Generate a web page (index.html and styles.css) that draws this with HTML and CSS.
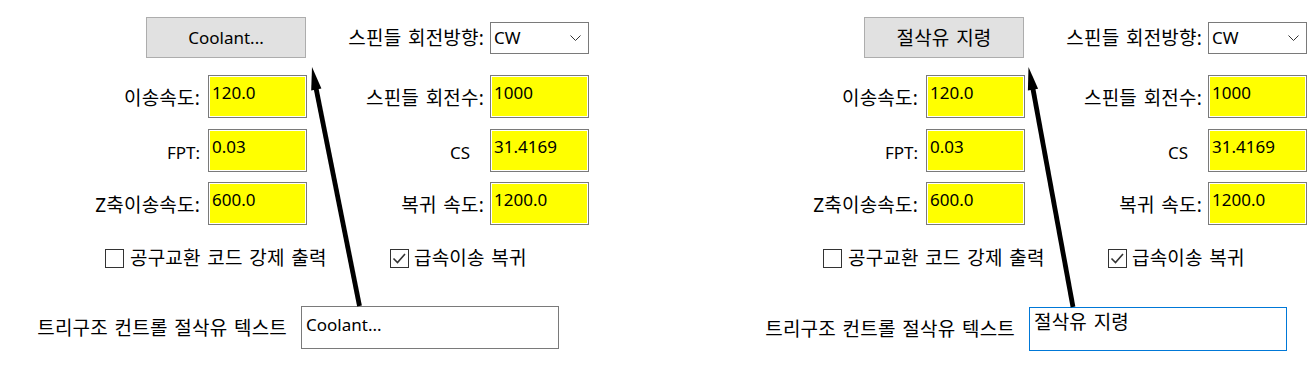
FILE: index.html
```html
<!DOCTYPE html>
<html lang="ko">
<head>
<meta charset="utf-8">
<title>Coolant text</title>
<link rel="stylesheet" href="styles.css">
</head>
<body>
<div class="screen">
  <section class="panel">
    <div class="grid row-top">
      <button class="btn">Coolant...</button>
      <span class="lbl lbl-r ko">스핀들 회전방향:</span>
      <div class="combo"><span>CW</span>
        <svg class="chev" width="11" height="6" viewBox="0 0 11 6"><polyline points="0.5,0.5 5.5,5.5 10.5,0.5" fill="none" stroke="#333" stroke-width="1"/></svg>
      </div>
    </div>
    <div class="grid fields">
      <span class="lbl lbl-l ko">이송속도:</span>
      <div class="field">120.0</div>
      <span class="lbl lbl-r ko">스핀들 회전수:</span>
      <div class="field">1000</div>
      <span class="lbl lbl-l">FPT:</span>
      <div class="field">0.03</div>
      <span class="lbl lbl-r lbl-cs">CS</span>
      <div class="field">31.4169</div>
      <span class="lbl lbl-l ko">Z축이송속도:</span>
      <div class="field">600.0</div>
      <span class="lbl lbl-r ko">복귀 속도:</span>
      <div class="field">1200.0</div>
    </div>
    <div class="checks">
      <div class="check"><span class="box"></span><span class="ko">공구교환 코드 강제 출력</span></div>
      <div class="check"><span class="box"><svg width="19" height="19" viewBox="0 0 19 19"><polyline points="3.5,9.5 7.5,13.5 15,5" fill="none" stroke="#333" stroke-width="1.6"/></svg></span><span class="ko">급속이송 복귀</span></div>
    </div>
    <div class="tree-row">
      <span class="lbl ko tree-lbl">트리구조 컨트롤 절삭유 텍스트</span>
      <div class="field field-wide">Coolant...</div>
    </div>
    <svg class="arrow" width="718" height="368" viewBox="0 0 718 368">
      <line x1="316" y1="88" x2="359.5" y2="306" stroke="#000" stroke-width="4.8"/>
      <polygon points="312,67 321.4,88.6 311.2,90.6" fill="#000"/>
    </svg>
  </section>

  <section class="panel">
    <div class="grid row-top">
      <button class="btn ko">절삭유 지령</button>
      <span class="lbl lbl-r ko">스핀들 회전방향:</span>
      <div class="combo"><span>CW</span>
        <svg class="chev" width="11" height="6" viewBox="0 0 11 6"><polyline points="0.5,0.5 5.5,5.5 10.5,0.5" fill="none" stroke="#333" stroke-width="1"/></svg>
      </div>
    </div>
    <div class="grid fields">
      <span class="lbl lbl-l ko">이송속도:</span>
      <div class="field">120.0</div>
      <span class="lbl lbl-r ko">스핀들 회전수:</span>
      <div class="field">1000</div>
      <span class="lbl lbl-l">FPT:</span>
      <div class="field">0.03</div>
      <span class="lbl lbl-r lbl-cs">CS</span>
      <div class="field">31.4169</div>
      <span class="lbl lbl-l ko">Z축이송속도:</span>
      <div class="field">600.0</div>
      <span class="lbl lbl-r ko">복귀 속도:</span>
      <div class="field">1200.0</div>
    </div>
    <div class="checks">
      <div class="check"><span class="box"></span><span class="ko">공구교환 코드 강제 출력</span></div>
      <div class="check"><span class="box"><svg width="19" height="19" viewBox="0 0 19 19"><polyline points="3.5,9.5 7.5,13.5 15,5" fill="none" stroke="#333" stroke-width="1.6"/></svg></span><span class="ko">급속이송 복귀</span></div>
    </div>
    <div class="tree-row tree-row-shift">
      <span class="lbl ko tree-lbl">트리구조 컨트롤 절삭유 텍스트</span>
      <div class="field field-wide field-focus ko">절삭유 지령</div>
    </div>
    <svg class="arrow" width="718" height="368" viewBox="0 0 718 368">
      <line x1="314.8" y1="88" x2="355" y2="307" stroke="#000" stroke-width="4.8"/>
      <polygon points="310.5,67 320.1,88.7 309.9,90.5" fill="#000"/>
    </svg>
  </section>
</div>
</body>
</html>
```

FILE: styles.css
```css
html, body {
  margin: 0;
  padding: 0;
  background: #fff;
}

body {
  font-family: "Noto Sans", "Noto Sans CJK KR", sans-serif;
  font-size: 17px;
  color: #000;
}

.screen {
  width: 1316px;
  height: 368px;
  display: flex;
  overflow: hidden;
}

.panel {
  position: relative;
  flex: 0 0 718px;
  padding-top: 17px;
  box-sizing: border-box;
}

.panel + .panel {
  flex: 1 1 auto;
}

.ko {
  font-family: "Noto Sans", "Noto Sans CJK KR", sans-serif;
  font-size: 19px;
  letter-spacing: 0.2px;
  word-spacing: 1.5px;
}

.grid {
  display: grid;
  grid-template-columns: 208px 99px 183px 99px;
  align-items: center;
}

.row-top {
  grid-template-rows: 41px;
}

.btn {
  grid-column: 1 / 3;
  justify-self: end;
  margin: 0 1px 0 0;
  width: 160px;
  height: 41px;
  background: #e1e1e1;
  border: 1px solid #adadad;
  font-family: "Noto Sans", "Noto Sans CJK KR", sans-serif;
  font-size: 17px;
  color: #000;
  padding: 0 0 1px 0;
}

.btn.ko {
  font-size: 19px;
}

.combo {
  height: 32px;
  box-sizing: border-box;
  border: 1px solid #7a7a7a;
  background: #fff;
  display: flex;
  align-items: center;
  justify-content: space-between;
  padding: 0 7px 0 3px;
  line-height: 23px;
}

.chev {
  display: block;
}

.lbl {
  white-space: nowrap;
  line-height: 23px;
}

.lbl-l {
  justify-self: end;
  padding-right: 8px;
  padding-top: 4px;
}

.lbl-r {
  justify-self: end;
  padding-right: 6px;
}

.row-top .lbl-r {
  padding-top: 1px;
}

.fields .lbl-r {
  padding-top: 4px;
}

.fields .lbl-cs {
  padding-right: 20px;
}

.fields {
  margin-top: 17px;
  grid-template-rows: 43px 43px 43px;
  row-gap: 10.5px;
}

.field {
  height: 43px;
  box-sizing: border-box;
  border: 1px solid #7a7a7a;
  box-shadow: inset 0 0 0 1px #fff;
  background: #ffff00;
  padding: 5px 3px 0;
  line-height: 23px;
  white-space: nowrap;
  overflow: hidden;
}

.checks {
  margin-top: 23px;
  padding-left: 105px;
  display: grid;
  grid-template-columns: 285px auto;
  height: 20px;
}

.check {
  display: flex;
  align-items: center;
  gap: 6px;
  line-height: 20px;
}

.check:last-child {
  gap: 5px;
}

.box {
  flex: 0 0 auto;
  width: 19px;
  height: 19px;
  box-sizing: border-box;
  border: 1px solid #333;
  background: #fff;
  position: relative;
}

.box svg {
  position: absolute;
  left: -1px;
  top: -1px;
}

.tree-row {
  margin-top: 38px;
  display: grid;
  grid-template-columns: 301px 258px;
  align-items: center;
}

.tree-row-shift {
  padding-left: 10px;
  margin-top: 39px;
}

.tree-lbl {
  justify-self: end;
  padding-right: 14px;
  padding-top: 1px;
}

.field-wide {
  background: #fff;
  box-shadow: none;
  padding: 6px 4px 0;
}

.field-focus {
  border-color: #0078d7;
  height: 44px;
  padding: 3px 4px 0;
}

.arrow {
  position: absolute;
  left: 0;
  top: 0;
  pointer-events: none;
}
```
